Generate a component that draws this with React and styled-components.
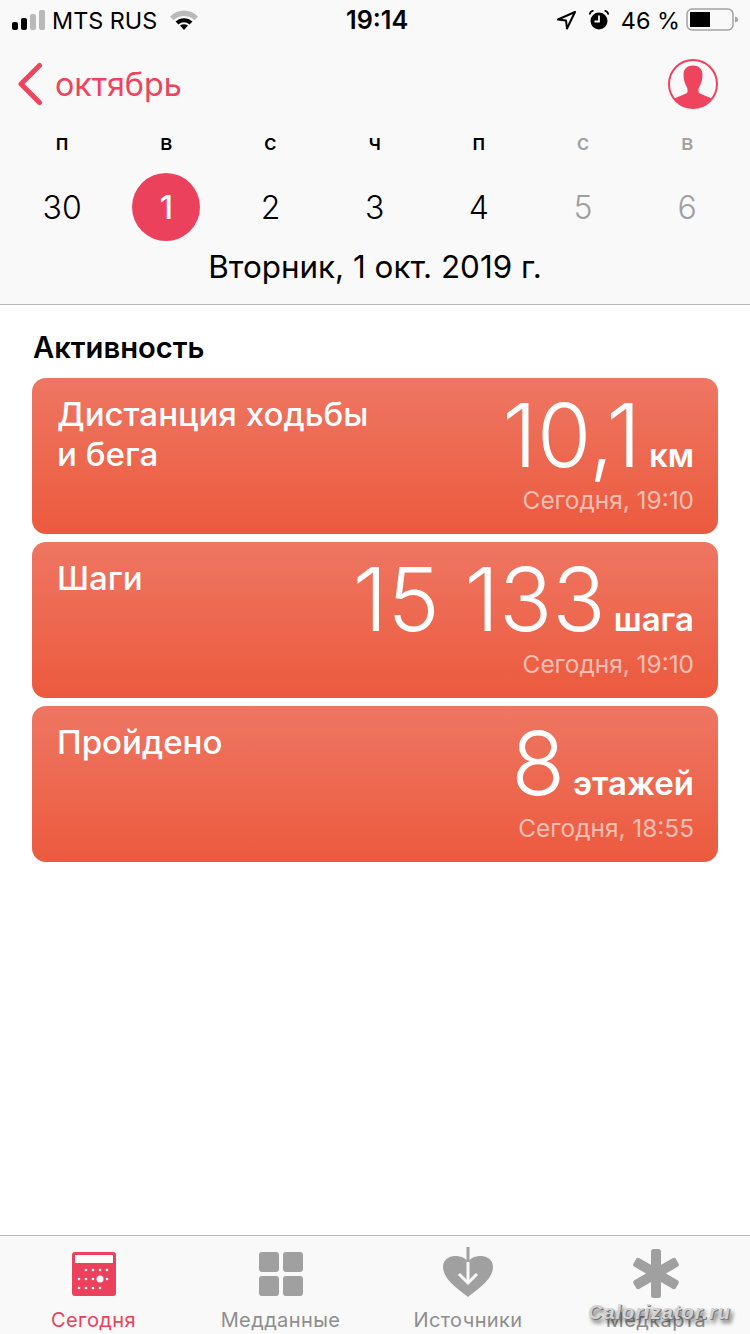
import React from 'react'
import styled, { createGlobalStyle } from 'styled-components'

const Global = createGlobalStyle`
  html, body { margin: 0; padding: 0; background: #fff; }
  body { font-family: Inter, "Noto Sans", sans-serif; }
`

const Page = styled.div`
  width: 750px;
  height: 1334px;
  display: flex;
  flex-direction: column;
  position: relative;
  overflow: hidden;
  background: #fff;
`

const Header = styled.header`
  height: 304px;
  background: #f9f9f9;
  border-bottom: 1px solid #b7b7b7;
  display: flex;
  flex-direction: column;
  flex-shrink: 0;
`

const StatusBar = styled.div`
  height: 40px;
  padding: 0 12px;
  display: flex;
  align-items: center;
  justify-content: space-between;
  position: relative;
  color: #000;
  font-size: 23.4px;
`

const StatusSide = styled.div`
  display: flex;
  align-items: center;
  gap: ${p => p.$gap}px;
`

const WifiSlot = styled.div`
  display: flex;
  margin-left: 7px;
`

const BatterySlot = styled.div`
  display: flex;
  margin-left: -6px;
`

const Clock = styled.div`
  position: absolute;
  left: 346px;
  top: 6px;
  font-size: 25.2px;
  line-height: 29px;
  font-weight: 600;
`

const NavRow = styled.div`
  height: 68px;
  padding: 10px 32px 0 17px;
  display: flex;
  align-items: center;
  justify-content: space-between;
`

const BackLink = styled.div`
  display: flex;
  align-items: center;
  gap: 12px;
  color: #ee445e;
  font-size: 32.3px;
`

const WeekGrid = styled.div`
  display: grid;
  grid-template-columns: repeat(7, 104.2px);
  padding-left: 10px;
  margin-top: 7px;
  justify-items: center;
  align-items: center;
`

const DayLetter = styled.div`
  height: 34px;
  line-height: 34px;
  font-size: 22px;
  font-weight: 450;
  color: ${p => (p.$weekend ? '#a0a0a0' : '#000')};
`

const DayNumber = styled.div`
  width: 68px;
  height: 68px;
  margin-top: 14px;
  border-radius: 50%;
  display: flex;
  align-items: center;
  justify-content: center;
  font-size: 32px;
  font-weight: ${p => (p.$active ? 500 : 350)};
  color: ${p => (p.$active ? '#fff' : p.$weekend ? '#a0a0a0' : '#000')};
  background: ${p => (p.$active ? '#ec415c' : 'transparent')};
`

const DateLine = styled.div`
  margin-top: 8px;
  text-align: center;
  font-size: 31.4px;
  line-height: 36px;
  color: #000;
`

const Content = styled.main`
  flex: 1;
  padding: 24px 32px 0;
`

const SectionTitle = styled.h2`
  margin: 0 0 12px 1px;
  font-size: 29.2px;
  line-height: 37px;
  font-weight: 600;
  color: #000;
`

const Cards = styled.div`
  display: flex;
  flex-direction: column;
  gap: 8px;
`

const Card = styled.section`
  height: 156px;
  box-sizing: border-box;
  padding: 16px 24px 19px 25px;
  border-radius: 14px;
  background: linear-gradient(#ee7662, #ec5a3e);
  display: flex;
  justify-content: space-between;
  color: #fff;
`

const CardTitle = styled.div`
  font-size: 33.1px;
  line-height: 40px;
  font-weight: 500;
  white-space: pre-line;
`

const CardRight = styled.div`
  display: flex;
  flex-direction: column;
  align-items: flex-end;
  justify-content: flex-end;
`

const ValueRow = styled.div`
  display: flex;
  align-items: baseline;
  gap: 8px;
  margin-bottom: 10px;
`

const Value = styled.span`
  font-size: 88px;
  line-height: 78px;
  font-weight: 300;
`

const Unit = styled.span`
  font-size: 33px;
  line-height: 40px;
  font-weight: 600;
`

const Stamp = styled.div`
  font-size: 24.4px;
  line-height: 30px;
  color: rgba(255, 255, 255, 0.6);
`

const TabBar = styled.nav`
  height: 98px;
  flex-shrink: 0;
  background: #f9f9f9;
  border-top: 1px solid #b7b7b7;
  display: grid;
  grid-template-columns: 187px 187px 188px 188px;
`

const Tab = styled.div`
  display: flex;
  flex-direction: column;
  align-items: center;
  color: ${p => (p.$active ? '#ec415c' : '#8e8e8e')};
  font-size: 20px;
  font-weight: 400;
  letter-spacing: 0.4px;
`

const TabIcon = styled.div`
  height: 62px;
  display: flex;
  align-items: flex-end;
  justify-content: center;
`

const TabLabel = styled.div`
  margin-top: 10px;
  line-height: 24px;
`

const Watermark = styled.div`
  position: absolute;
  left: 588px;
  top: 1301px;
  font: italic 700 20px "Liberation Sans", sans-serif;
  letter-spacing: 1px;
  color: #d2d2d2;
  text-shadow: 1px 1px 0 #777, 3px 4px 4px rgba(0, 0, 0, 0.65);
`

const Signal = () => (
  <svg width="34" height="20" viewBox="0 0 34 20">
    <rect x="0" y="12" width="6" height="8" rx="2" fill="#000" />
    <rect x="9" y="8" width="6" height="12" rx="2" fill="#000" />
    <rect x="18" y="4" width="6" height="16" rx="2" fill="#b9b9b9" />
    <rect x="27" y="0" width="6" height="20" rx="2" fill="#b9b9b9" />
  </svg>
)

const Wifi = () => (
  <svg width="28" height="20" viewBox="0 0 28 20">
    <path d="M0 6.5C8-1.5 20-1.5 28 6.500L24.500 10C18.500 4.500 9.500 4.500 3.500 10Z" fill="#b9b9b9" />
    <path d="M5.500 11.500C10.500 7 17.500 7 22.500 11.500L19.500 14.500C16 11.500 12 11.500 8.500 14.500Z" fill="#000" />
    <path d="M10 15.500C12.500 13.800 15.500 13.800 18 15.500L14 20Z" fill="#000" />
  </svg>
)

const Location = () => (
  <svg width="22" height="20" viewBox="0 0 22 20">
    <path d="M20 2L3 9.500L11 10.500L12 18.500Z" fill="none" stroke="#000" strokeWidth="2" strokeLinejoin="round" />
  </svg>
)

const Alarm = () => (
  <svg width="20" height="20" viewBox="0 0 20 20">
    <circle cx="10" cy="11" r="8.500" fill="#000" />
    <path d="M10 5.500V11.500H5.500" fill="none" stroke="#f9f9f9" strokeWidth="1.800" />
    <path d="M0.500 4.500C1 2.500 2.500 1 4.500 0.500M19.500 4.500C19 2.500 17.500 1 15.500 0.500" fill="none" stroke="#000" strokeWidth="1.800" />
  </svg>
)

const Battery = () => (
  <svg width="52" height="24" viewBox="0 0 52 24">
    <rect x="1" y="1" width="46" height="21" rx="5" fill="none" stroke="#a3a3a3" strokeWidth="1.500" />
    <rect x="4" y="4" width="20" height="15" fill="#000" />
    <path d="M49 8.500C51 9 52 10 52 11.500C52 13 51 14 49 14.500Z" fill="#a3a3a3" />
  </svg>
)

const Chevron = () => (
  <svg width="26" height="44" viewBox="0 0 26 44">
    <path d="M22.500 3.500L4 22L22.500 40.500" fill="none" stroke="#ee445e" strokeWidth="5" strokeLinecap="round" strokeLinejoin="round" />
  </svg>
)

const Avatar = () => (
  <svg width="50" height="50" viewBox="0 0 50 50">
    <defs>
      <clipPath id="avatarClip"><circle cx="25" cy="25" r="24" /></clipPath>
    </defs>
    <circle cx="25" cy="25" r="24" fill="none" stroke="#ee445e" strokeWidth="2" />
    <path clipPath="url(#avatarClip)" d="M25 6.500C18.500 6.500 15.500 10.500 15.500 16C15.500 21 17 25 19 28.500C19.800 30 19.800 32 19 34C15 36.500 9.500 37 5 41V50H45V41C40.500 37 35 36.500 31 34C30.200 32 30.200 30 31 28.500C33 25 34.500 21 34.500 16C34.500 10.500 31.500 6.500 25 6.500Z" fill="#ee445e" />
  </svg>
)

const TodayIcon = () => {
  const dots = [
    ...[1, 2, 3, 4].map(i => [7 + i * 7, 18]),
    ...[0, 1, 2, 4].map(i => [7 + i * 7, 27]),
    ...[0, 1, 2, 3].map(i => [7 + i * 7, 36]),
  ]
  return (
    <svg width="44" height="46" viewBox="0 0 44 46">
      <rect width="44" height="44" rx="3" fill="#ec415c" />
      <rect x="3" y="3" width="38" height="8" fill="#fff" />
      {dots.map(([x, y]) => <circle key={`${x}-${y}`} cx={x} cy={y} r="1.300" fill="#fff" />)}
      <circle cx="28" cy="27" r="3.500" fill="#fff" />
    </svg>
  )
}

const GridIcon = () => (
  <svg width="44" height="46" viewBox="0 0 44 46" fill="#a0a0a0">
    <rect x="0" y="0" width="20" height="20" rx="3" />
    <rect x="24" y="0" width="20" height="20" rx="3" />
    <rect x="0" y="24" width="20" height="20" rx="3" />
    <rect x="24" y="24" width="20" height="20" rx="3" />
  </svg>
)

const HeartIcon = () => (
  <svg width="52" height="51" viewBox="0 0 52 51">
    <path d="M26 50C18 43 1 33 1 20C1 13 6.500 9 13 9C19 9 23.500 11 26 15C28.500 11 33 9 39 9C45.500 9 51 13 51 20C51 33 34 43 26 50Z" fill="#a0a0a0" />
    <path d="M26 15V35" stroke="#f9f9f9" strokeWidth="3" />
    <path d="M26 0V15" stroke="#a0a0a0" strokeWidth="3" />
    <path d="M17 27L26 36L35 27" fill="none" stroke="#f9f9f9" strokeWidth="3" />
  </svg>
)

const StarIcon = () => (
  <svg width="50" height="50" viewBox="0 0 50 50" fill="#a0a0a0">
    <rect x="20" y="1" width="10" height="49" rx="2.500" />
    <rect x="20" y="1" width="10" height="49" rx="2.500" transform="rotate(60 25 25.500)" />
    <rect x="20" y="1" width="10" height="49" rx="2.500" transform="rotate(-60 25 25.500)" />
  </svg>
)

const days = [
  { letter: 'п', num: '30' },
  { letter: 'в', num: '1', active: true },
  { letter: 'с', num: '2' },
  { letter: 'ч', num: '3' },
  { letter: 'п', num: '4' },
  { letter: 'с', num: '5', weekend: true },
  { letter: 'в', num: '6', weekend: true },
]

const activity = [
  { title: 'Дистанция ходьбы\nи бега', value: '10,1', unit: 'км', time: 'Сегодня, 19:10' },
  { title: 'Шаги', value: '15 133', unit: 'шага', time: 'Сегодня, 19:10' },
  { title: 'Пройдено', value: '8', unit: 'этажей', time: 'Сегодня, 18:55' },
]

const tabs = [
  { label: 'Сегодня', icon: <TodayIcon />, active: true },
  { label: 'Медданные', icon: <GridIcon /> },
  { label: 'Источники', icon: <HeartIcon /> },
  { label: 'Медкарта', icon: <StarIcon /> },
]

export default function App() {
  return (
    <Page>
      <Global />
      <Header>
        <StatusBar>
          <StatusSide $gap={6}>
            <Signal />
            <span>MTS RUS</span>
            <WifiSlot><Wifi /></WifiSlot>
          </StatusSide>
          <Clock>19:14</Clock>
          <StatusSide $gap={12}>
            <Location />
            <Alarm />
            <span>46 %</span>
            <BatterySlot><Battery /></BatterySlot>
          </StatusSide>
        </StatusBar>
        <NavRow>
          <BackLink>
            <Chevron />
            <span>октябрь</span>
          </BackLink>
          <Avatar />
        </NavRow>
        <WeekGrid>
          {days.map((d, i) => (
            <DayLetter key={i} $weekend={d.weekend}>{d.letter}</DayLetter>
          ))}
          {days.map((d, i) => (
            <DayNumber key={i} $active={d.active} $weekend={d.weekend}>{d.num}</DayNumber>
          ))}
        </WeekGrid>
        <DateLine>Вторник, 1 окт. 2019 г.</DateLine>
      </Header>
      <Content>
        <SectionTitle>Активность</SectionTitle>
        <Cards>
          {activity.map(a => (
            <Card key={a.unit}>
              <CardTitle>{a.title}</CardTitle>
              <CardRight>
                <ValueRow>
                  <Value>{a.value}</Value>
                  <Unit>{a.unit}</Unit>
                </ValueRow>
                <Stamp>{a.time}</Stamp>
              </CardRight>
            </Card>
          ))}
        </Cards>
      </Content>
      <TabBar>
        {tabs.map(t => (
          <Tab key={t.label} $active={t.active}>
            <TabIcon>{t.icon}</TabIcon>
            <TabLabel>{t.label}</TabLabel>
          </Tab>
        ))}
      </TabBar>
      <Watermark>Calorizator.ru</Watermark>
    </Page>
  )
}
